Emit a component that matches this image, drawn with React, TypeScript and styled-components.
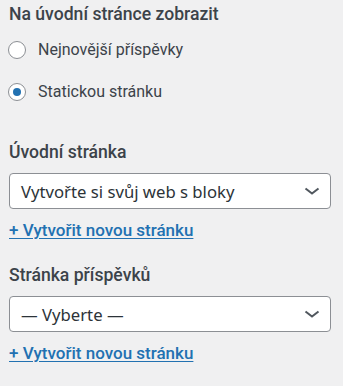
import React from "react";
import styled, { createGlobalStyle } from "styled-components";

const Global = createGlobalStyle`
  html, body { margin: 0; padding: 0; background: #f0f0f1; }
  body { font-family: Roboto, "Noto Sans", sans-serif; color: #2c3338; }
`;

const Panel = styled.div`
  width: 343px;
  height: 386px;
  box-sizing: border-box;
  padding: 2px 12px 0 9px;
  display: flex;
  flex-direction: column;
`;

const Title = styled.div<{ $top?: number }>`
  font-size: 17.6px;
  font-weight: 500;
  line-height: 24px;
  color: #3c434a;
  margin-top: ${(p) => p.$top ?? 0}px;
`;

const RadioList = styled.div`
  display: flex;
  flex-direction: column;
  gap: 18px;
  margin-top: 12px;
`;

const RadioRow = styled.label`
  display: flex;
  align-items: center;
  gap: 12px;
  font-size: 16px;
  line-height: 24px;
  color: #3c434a;
  margin-left: -1px;
`;

const Circle = styled.span<{ $checked?: boolean }>`
  width: 18px;
  height: 18px;
  box-sizing: border-box;
  border-radius: 50%;
  border: 1px solid #8c8f94;
  background: #fff;
  display: flex;
  align-items: center;
  justify-content: center;
  flex: none;
  &::after {
    content: "";
    width: 8px;
    height: 8px;
    border-radius: 50%;
    background: #2271b1;
    display: ${(p) => (p.$checked ? "block" : "none")};
  }
`;

const Select = styled.div`
  margin-top: 9px;
  height: 36px;
  box-sizing: border-box;
  border: 1px solid #8c8f94;
  border-radius: 4px;
  background: #fff;
  display: flex;
  align-items: center;
  justify-content: space-between;
  padding: 0 8px 0 11px;
  font-family: "Noto Sans", Roboto, sans-serif;
  font-size: 16.7px;
  color: #2c3338;
`;

const Chevron = () => (
  <svg width="20" height="20" viewBox="0 0 20 20" aria-hidden>
    <path d="M3.5 7.5 L10 12.5 L16.5 7.5" fill="none" stroke="#50575e" strokeWidth="2" />
  </svg>
);

const AddLink = styled.a`
  align-self: flex-start;
  margin-top: 10px;
  font-size: 17px;
  font-weight: 500;
  line-height: 22px;
  color: #2271b1;
  text-decoration: underline;
  text-underline-offset: 2px;
`;

export default function App() {
  return (
    <>
      <Global />
      <Panel>
        <Title>Na úvodní stránce zobrazit</Title>
        <RadioList>
          <RadioRow>
            <Circle />
            Nejnovější příspěvky
          </RadioRow>
          <RadioRow>
            <Circle $checked />
            Statickou stránku
          </RadioRow>
        </RadioList>
        <Title $top={36}>Úvodní stránka</Title>
        <Select>
          <span>Vytvořte si svůj web s bloky</span>
          <Chevron />
        </Select>
        <AddLink href="#">+ Vytvořit novou stránku</AddLink>
        <Title $top={22}>Stránka příspěvků</Title>
        <Select>
          <span>— Vyberte —</span>
          <Chevron />
        </Select>
        <AddLink href="#">+ Vytvořit novou stránku</AddLink>
      </Panel>
    </>
  );
}
